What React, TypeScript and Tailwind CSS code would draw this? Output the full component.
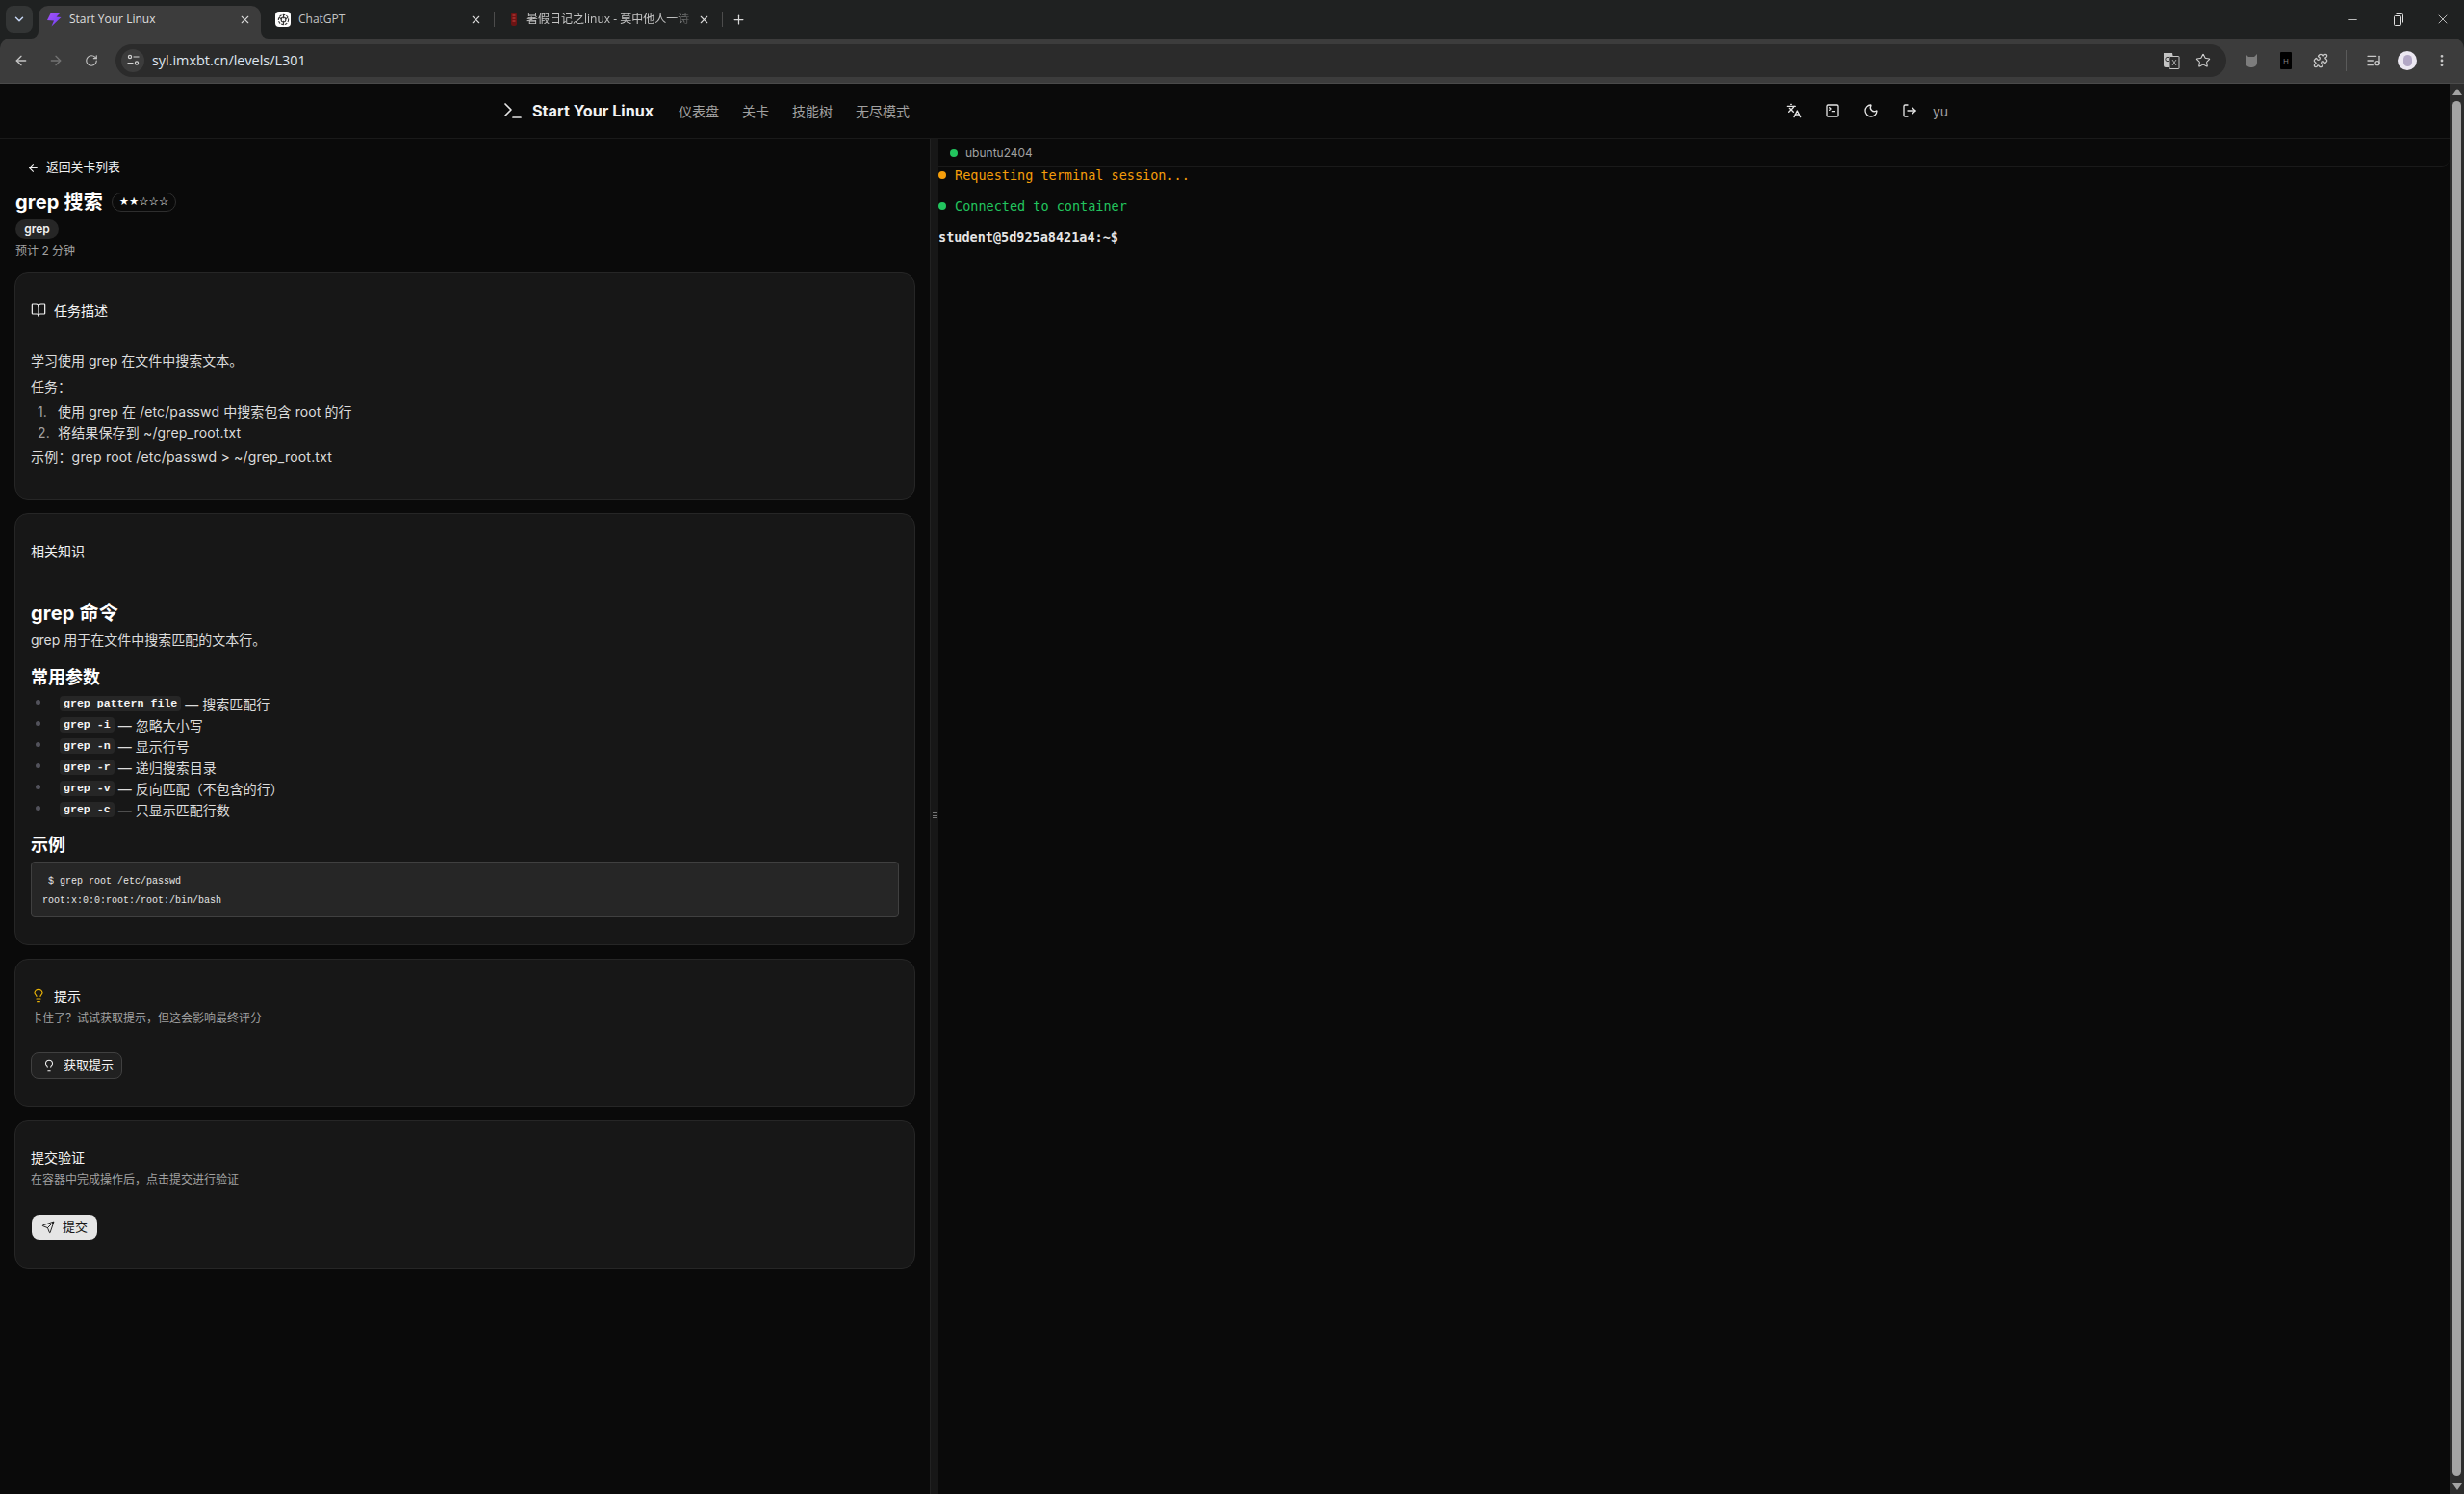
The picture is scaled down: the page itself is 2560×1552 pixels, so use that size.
import React from "react";
import {
  ArrowLeft, ArrowRight, BookOpen, ChevronDown, EllipsisVertical, Languages, Lightbulb, ListMusic, LogOut, Minus, Moon, Plus, Puzzle, RotateCw, Send, SquareTerminal, Star, Terminal, X,
} from "lucide-react";

const SANS = "font-['Open_Sans','Noto_Sans_CJK_SC',sans-serif]";
const PAGE = "font-['Inter','Noto_Sans_CJK_SC',sans-serif]";

function Bolt() {
  return (
    <svg width="16" height="16" viewBox="0 0 16 16" className="shrink-0">
      <defs>
        <linearGradient id="b" x1="0" y1="0" x2="1" y2="1">
          <stop offset="0" stopColor="#a855f7" />
          <stop offset="1" stopColor="#6d3df5" />
        </linearGradient>
      </defs>
      <path d="M5 1 L15 1 L10.5 5.5 L15.5 6 L5.5 15.5 L8 9.5 L1 9 Z" fill="url(#b)" />
    </svg>
  );
}

function GptIcon() {
  return (
    <div className="w-4 h-4 rounded-[4px] bg-white flex items-center justify-center shrink-0">
      <svg width="13" height="13" viewBox="0 0 24 24" fill="none" stroke="#333" strokeWidth="2">
        <circle cx="12" cy="12" r="9.5" strokeDasharray="5 2" />
        <circle cx="12" cy="12" r="4.5" />
        <path d="M12 2.5v7M3.5 8l6 3.5M20.5 8l-6 3.5M12 21.5v-7" />
      </svg>
    </div>
  );
}

function RedIcon() {
  return (
    <svg width="10" height="16" viewBox="0 0 10 16" className="shrink-0">
      <rect x="2" y="1" width="6" height="14" rx="2" fill="#6b1414" />
      <path d="M3.5 4h3M3.5 7h3M3.5 10h3" stroke="#c9403f" strokeWidth="1.2" />
    </svg>
  );
}

function Tab({ icon, title, active, width, titleClass }: { icon: React.ReactNode; title: string; active?: boolean; width: string; titleClass: string }) {
  return (
    <div className={`${width} h-[34px] relative flex items-center pb-[6px] ${active ? "bg-[#3c3c3c] rounded-t-[10px] pl-2 pr-[10px]" : "pl-[15px] pr-[12px]"}`}>
      {active && (
        <>
          <div className="absolute -left-[8px] bottom-0 w-2 h-2 bg-[#3c3c3c]"><div className="w-2 h-2 bg-[#1f2121] rounded-br-[8px]" /></div>
          <div className="absolute -right-[8px] bottom-0 w-2 h-2 bg-[#3c3c3c]"><div className="w-2 h-2 bg-[#1f2121] rounded-bl-[8px]" /></div>
        </>
      )}
      {icon}
      <span className={`ml-2 text-[12px] whitespace-nowrap overflow-hidden flex-1 ${titleClass}`}>{title}</span>
      <X size={13} strokeWidth={2} className="shrink-0 text-[#d8d8d8]" />
    </div>
  );
}

function TabStrip() {
  return (
    <div className={`h-10 bg-[#1f2121] flex items-start pt-[6px] ${SANS}`}>
      <div className="ml-[6px] w-7 h-7 rounded-lg bg-[#333535] flex items-center justify-center">
        <ChevronDown size={14} strokeWidth={2.5} className="text-[#c7d7f5]" />
      </div>
      <div className="ml-[6px]">
        <Tab active width="w-[231px]" icon={<Bolt />} title="Start Your Linux" titleClass="text-[#dedede]" />
      </div>
      <Tab width="w-[242px]" icon={<GptIcon />} title="ChatGPT" titleClass="text-[#c4c4c4]" />
      <div className="w-px h-4 mt-[6px] bg-[#4c4c4c]" />
      <Tab width="w-[236px]" icon={<RedIcon />} title="暑假日记之linux - 莫中他人一诗" titleClass="text-[#c4c4c4] mr-1 [mask-image:linear-gradient(to_right,black_88%,transparent)]" />
      <div className="w-px h-4 mt-[6px] bg-[#4c4c4c]" />
      <Plus size={15} strokeWidth={2} className="ml-[9px] mt-[7px] text-[#d8d8d8]" />
      <div className="flex-1" />
      <div className="flex items-center h-7 text-[#e0e0e0]">
        <Minus size={13} strokeWidth={1.5} className="mr-[36px]" />
        <svg width="10" height="13" viewBox="0 0 10 13" fill="none" stroke="currentColor" strokeWidth="1" className="mr-[33px]">
          <rect x="0.5" y="2.5" width="7" height="10" rx="1" />
          <path d="M2.5 0.5h6a1 1 0 0 1 1 1v8" />
        </svg>
        <X size={16} strokeWidth={1.2} className="mr-[14px]" />
      </div>
    </div>
  );
}

function Toolbar() {
  return (
    <div className={`h-[47px] bg-[#3c3c3c] rounded-t-[10px] border-b border-[#4a4a4a] flex items-center pb-[1px] ${SANS}`}>
      <ArrowLeft size={16} className="ml-[14px] text-[#c4c4c4]" />
      <ArrowRight size={16} className="ml-[20px] text-[#737373]" />
      <RotateCw size={14} className="ml-[22px] text-[#c4c4c4]" />
      <div className="ml-[18px] h-[34px] w-[2193px] rounded-full bg-[#2b2b2b] flex items-center pl-[6px] pr-[16px]">
        <div className="w-6 h-6 rounded-full bg-[#3c3c3c] flex items-center justify-center">
          <svg width="13" height="13" viewBox="0 0 13 13" fill="none" stroke="#d4d4d4" strokeWidth="1.2">
            <circle cx="3" cy="3" r="1.6" />
            <path d="M6.5 3h6M0.5 9.5h6" />
            <circle cx="10" cy="9.5" r="1.6" />
          </svg>
        </div>
        <span className="ml-2 text-[14.4px] text-[#dfe6f0]">syl.imxbt.cn/levels/L301</span>
        <div className="flex-1" />
        <svg width="18" height="18" viewBox="0 0 18 18" className="mr-[16px]">
          <path d="M1 1h9l3 15H3a2 2 0 0 1-2-2z" fill="#c4c4c4" />
          <rect x="7" y="4.5" width="10" height="13" rx="0.5" fill="#2b2b2b" stroke="#c4c4c4" />
          <path d="M10 8l4 6M14 8l-4 6" stroke="#c4c4c4" strokeWidth="0.8" />
          <circle cx="5" cy="7.5" r="2.2" fill="none" stroke="#333" strokeWidth="1" />
        </svg>
        <Star size={16} strokeWidth={1.6} className="text-[#d0d0d0]" />
      </div>
      <svg width="16" height="16" viewBox="0 0 16 16" className="ml-[18px]">
        <path d="M2 1l3 3h6l3-3v9a5 5 0 0 1-5 5H7a5 5 0 0 1-5-5z" fill="#7d7d7d" />
      </svg>
      <div className="ml-[22px] w-3 h-[18px] bg-black rounded-[1px] flex items-center justify-center text-[8px] leading-none text-[#8a8a8a]">H</div>
      <Puzzle size={16} className="ml-[22px] text-[#c8c8c8]" />
      <div className="ml-[18px] w-px h-[22px] bg-[#5a5a5a]" />
      <ListMusic size={16} className="ml-[20px] text-[#c8c8c8]" />
      <div className="ml-[17px] w-5 h-5 rounded-full bg-[#ece8f2] flex items-center justify-center">
        <div className="w-[9px] h-3 rounded-full bg-[#b3a8c6]" />
      </div>
      <EllipsisVertical size={16} strokeWidth={2.2} className="ml-[18px] text-[#c8c8c8]" />
    </div>
  );
}

function Navbar() {
  return (
    <div className="h-[57px] border-b border-[#1a1a1a] flex items-center shrink-0">
      <Terminal size={24} strokeWidth={1.7} className="ml-[521px] text-[#e5e5e5]" />
      <span className="ml-2 w-[128px] text-[16.2px] font-bold text-[#f2f2f2] whitespace-nowrap">Start Your Linux</span>
      <div className="ml-6 flex gap-6 text-[14px] text-[#a1a1a1] whitespace-nowrap">
        <span>仪表盘</span>
        <span>关卡</span>
        <span>技能树</span>
        <span>无尽模式</span>
      </div>
      <Languages size={16} className="ml-[911px] text-[#e5e5e5]" />
      <SquareTerminal size={16} className="ml-6 text-[#e5e5e5]" />
      <Moon size={16} className="ml-6 text-[#e5e5e5]" />
      <LogOut size={16} className="ml-6 text-[#e5e5e5]" />
      <span className="ml-4 text-[14px] text-[#a1a1a1]">yu</span>
    </div>
  );
}

function Card({ children, className }: { children: React.ReactNode; className: string }) {
  return <div className={`rounded-[14px] bg-[#171717] border border-[#262626] px-4 ${className}`}>{children}</div>;
}

function Code({ children }: { children: React.ReactNode }) {
  return <code className="bg-[#262626] rounded-[4px] px-1 h-4 inline-flex items-center font-['Liberation_Mono',monospace] font-bold text-[11.6px] text-[#f5f5f5] mr-1">{children}</code>;
}

const params: [string, string][] = [
  ["grep pattern file", "— 搜索匹配行"],
  ["grep -i", "— 忽略大小写"],
  ["grep -n", "— 显示行号"],
  ["grep -r", "— 递归搜索目录"],
  ["grep -v", "— 反向匹配（不包含的行）"],
  ["grep -c", "— 只显示匹配行数"],
];

function LeftPanel() {
  return (
    <div className="w-[966px] shrink-0 px-[15px] pb-4">
      <div className="h-5 mt-5 flex items-center pl-[13px] text-[#f0f0f0]">
        <ArrowLeft size={13} strokeWidth={2} />
        <span className="ml-[7px] text-[12.8px]">返回关卡列表</span>
      </div>
      <div className="mt-3 h-7 flex items-center pl-px">
        <span className="text-[20px] font-bold text-white tracking-[0.2px]">grep 搜索</span>
        <span className="ml-[9px] w-[67px] h-5 rounded-full border border-[#2e2e2e] flex items-center justify-center font-['DejaVu_Sans',sans-serif] text-[11.5px] leading-none text-white">★★☆☆☆</span>
      </div>
      <div className="mt-1 ml-px w-[45px] h-5 rounded-full bg-[#262626] flex items-center justify-center text-[12px] font-semibold text-[#f0f0f0]">grep</div>
      <div className="mt-[5px] ml-px h-4 text-[12px] leading-4 text-[#a1a1a1]">预计 2 分钟</div>

      <Card className="mt-[14px] h-[236px] pt-[28px]">
        <div className="h-5 flex items-center text-[14px] text-[#f5f5f5]">
          <BookOpen size={16} strokeWidth={1.8} />
          <span className="ml-2">任务描述</span>
        </div>
        <div className="text-[14px] leading-[22px] text-[#dcdcdc]">
          <p className="mt-[32px]">学习使用 grep 在文件中搜索文本。</p>
          <p className="mt-[5px]">任务：</p>
          <ol className="mt-1">
            <li className="flex tracking-[0.1px]"><span className="w-[28px] pl-[7px] text-[#a1a1a1]">1.</span>使用 grep 在 /etc/passwd 中搜索包含 root 的行</li>
            <li className="flex tracking-[0.15px]"><span className="w-[28px] pl-[7px] text-[#a1a1a1]">2.</span>将结果保存到 ~/grep_root.txt</li>
          </ol>
          <p className="mt-[3px] tracking-[0.2px]">示例：grep root /etc/passwd &gt; ~/grep_root.txt</p>
        </div>
      </Card>

      <Card className="mt-[14px] h-[449px] pt-[28px]">
        <div className="h-5 flex items-center text-[14px] text-[#f0f0f0]">相关知识</div>
        <h1 className="mt-[41px] text-[20px] leading-7 font-bold text-white tracking-[0.2px]">grep 命令</h1>
        <p className="mt-[3px] text-[14px] leading-[22px] text-[#dcdcdc]">grep 用于在文件中搜索匹配的文本行。</p>
        <h2 className="mt-[15px] text-[18px] leading-[26px] font-bold text-white">常用参数</h2>
        <ul className="mt-[3px]">
          {params.map(([c, t]) => (
            <li key={c} className="h-[22px] flex items-center text-[14px] text-[#dcdcdc]">
              <span className="ml-[5px] mr-[20px] w-[5px] h-[5px] rounded-full bg-[#52525b] -mt-1" />
              <Code>{c}</Code>
              <span>{t}</span>
            </li>
          ))}
        </ul>
        <h2 className="mt-[13px] text-[18px] leading-[26px] font-bold text-white">示例</h2>
        <pre className="mt-1 h-[58px] rounded-[4px] bg-[#262626] border border-[#404040] pl-[11px] pt-[10px] font-['Liberation_Mono',monospace] text-[10px] leading-[19.5px] text-[#e5e5e5]">{" $ grep root /etc/passwd\nroot:x:0:0:root:/root:/bin/bash"}</pre>
      </Card>

      <Card className="mt-[14px] h-[154px] pt-[27px]">
        <div className="h-5 flex items-center text-[14px] text-[#f5f5f5]">
          <Lightbulb size={16} strokeWidth={1.8} className="text-[#eab308]" />
          <span className="ml-2">提示</span>
        </div>
        <p className="mt-[6px] text-[12px] leading-4 text-[#a1a1a1]">卡住了？试试获取提示，但这会影响最终评分</p>
        <button className="mt-[27px] h-[28px] w-[95px] rounded-lg bg-[#212121] border border-[#404040] flex items-center pl-[11px] text-[13px] text-[#f5f5f5]">
          <Lightbulb size={14} strokeWidth={1.8} />
          <span className="ml-[8px]">获取提示</span>
        </button>
      </Card>

      <Card className="mt-[14px] h-[154px] pt-[27px]">
        <div className="h-5 flex items-center text-[14px] text-[#f5f5f5]">提交验证</div>
        <p className="mt-[6px] text-[12px] leading-4 text-[#a1a1a1]">在容器中完成操作后，点击提交进行验证</p>
        <button className="mt-[28px] ml-px h-[26px] w-[68px] rounded-lg bg-[#e5e5e5] flex items-center pl-[10px] text-[13px] text-[#171717]">
          <Send size={14} strokeWidth={1.6} />
          <span className="ml-[8px]">提交</span>
        </button>
      </Card>
    </div>
  );
}

function Divider() {
  return (
    <div className="w-[9px] shrink-0 bg-[#171717] border-l border-[#222222] flex items-center justify-center">
      <div className="w-1 h-[6px] mt-[-2px] flex flex-col justify-between">
        <div className="h-px bg-[#777]" /><div className="h-px bg-[#777]" /><div className="h-px bg-[#777]" />
      </div>
    </div>
  );
}

function TerminalPanel() {
  return (
    <div className="flex-1 min-w-0">
      <div className="h-[29px] pt-px border-b border-[#1a1a1a] rounded-br-lg flex items-center pl-3">
        <span className="w-2 h-2 rounded-full bg-[#22c55e]" />
        <span className="ml-2 text-[12px] text-[#a1a1a1]">ubuntu2404</span>
      </div>
      <div className="font-['DejaVu_Sans_Mono',monospace] text-[13.5px] leading-[32px] -mt-[7px]">
        <div className="h-8 flex items-center text-[#f59e0b]">
          <span className="w-2 h-2 rounded-full bg-[#f59e0b]" />
          <span className="ml-[9px]">Requesting terminal session...</span>
        </div>
        <div className="h-8 flex items-center text-[#22c55e]">
          <span className="w-2 h-2 rounded-full bg-[#22c55e]" />
          <span className="ml-[9px]">Connected to container</span>
        </div>
        <div className="h-8 flex items-center font-bold text-[#e5e5e5]">student@5d925a8421a4:~$</div>
      </div>
    </div>
  );
}

function Scrollbar() {
  return (
    <div className="w-[15px] shrink-0 bg-[#2c2c2c] flex flex-col items-center pt-[5px] pb-1">
      <div className="w-0 h-0 border-x-[5px] border-x-transparent border-b-[7px] border-b-[#a3a3a3]" />
      <div className="mt-[6px] w-[9px] flex-1 rounded-full bg-[#a3a3a3]" />
      <div className="mt-2 w-0 h-0 border-x-[5px] border-x-transparent border-t-[7px] border-t-[#a3a3a3]" />
    </div>
  );
}

export default function App() {
  return (
    <div className={`w-[2560px] h-[1552px] overflow-hidden bg-[#1f2121] flex flex-col ${PAGE}`}>
      <TabStrip />
      <Toolbar />
      <div className="flex-1 flex min-h-0 bg-[#0a0a0a]">
        <div className="flex-1 min-w-0 flex flex-col">
          <Navbar />
          <div className="flex-1 flex min-h-0">
            <LeftPanel />
            <Divider />
            <TerminalPanel />
          </div>
        </div>
        <Scrollbar />
      </div>
    </div>
  );
}
